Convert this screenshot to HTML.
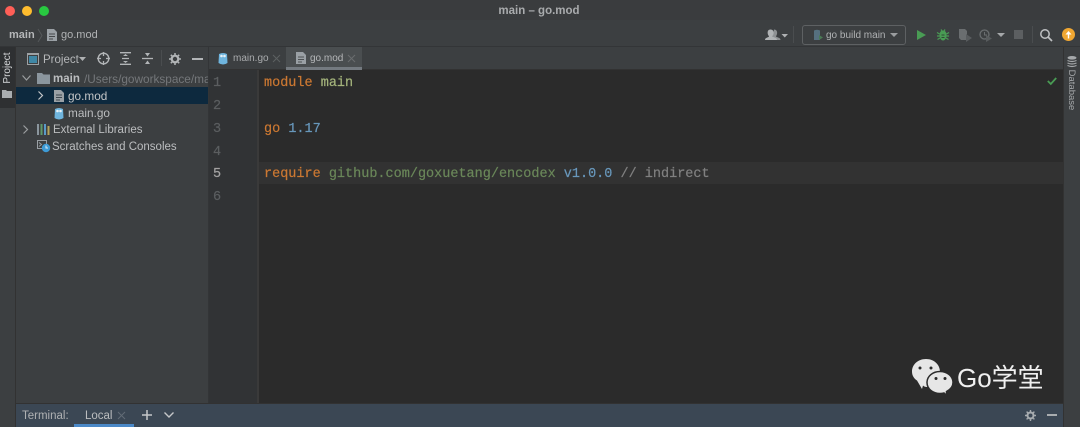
<!DOCTYPE html>
<html><head><meta charset="utf-8"><style>
html,body{margin:0;padding:0;width:1080px;height:427px;overflow:hidden;background:#3c3f41}
body{position:relative;font-family:"Liberation Sans",sans-serif;font-size:11.5px;color:#bbbbbb}
.a,.t{position:absolute}
.t{white-space:nowrap;line-height:16px}
.c{font-family:"Liberation Mono",monospace;font-size:13.5px;line-height:18px;-webkit-text-stroke:.2px}
svg{position:absolute;overflow:visible}
</style></head><body>
<!-- regions -->
<div class="a" style="left:0;top:0;width:1080px;height:20px;background:#3a3c3e"></div>
<div class="a" style="left:0;top:46px;width:1080px;height:1px;background:#333537"></div>
<div class="a" style="left:0;top:47px;width:16px;height:380px;background:#3c3f41"></div>
<div class="a" style="left:15px;top:47px;width:1px;height:380px;background:#323232"></div>
<div class="a" style="left:0;top:47px;width:15px;height:61px;background:#2e3032"></div>
<div class="a" style="left:208px;top:47px;width:1px;height:357px;background:#333537"></div>
<div class="a" style="left:209px;top:70px;width:49px;height:334px;background:#313335"></div>
<div class="a" style="left:258px;top:70px;width:805px;height:334px;background:#2b2b2b"></div>
<div class="a" style="left:257px;top:70px;width:2px;height:334px;background:#3a3a3a"></div>
<div class="a" style="left:259px;top:162px;width:804px;height:22px;background:#323232"></div>
<div class="a" style="left:1063px;top:47px;width:1px;height:380px;background:#323232"></div>
<div class="a" style="left:209px;top:69px;width:854px;height:1px;background:#323232"></div>
<div class="a" style="left:286px;top:47px;width:76px;height:23px;background:#4a4e50"></div>
<div class="a" style="left:286px;top:67px;width:76px;height:3px;background:#747a80"></div>
<div class="a" style="left:16px;top:87px;width:192px;height:17px;background:#0d293e"></div>
<div class="a" style="left:16px;top:404px;width:1047px;height:23px;background:#3b4754"></div>
<div class="a" style="left:16px;top:403px;width:1047px;height:1px;background:#323232"></div>
<div class="a" style="left:74px;top:424px;width:60px;height:3px;background:#4a88c7"></div>

<!-- traffic lights -->
<div class="a" style="left:5px;top:6px;width:10px;height:10px;border-radius:50%;background:#ff5f57"></div>
<div class="a" style="left:22px;top:6px;width:10px;height:10px;border-radius:50%;background:#febc2e"></div>
<div class="a" style="left:39px;top:6px;width:10px;height:10px;border-radius:50%;background:#28c840"></div>
<div class="t" style="left:-1px;width:1080px;text-align:center;top:3px;font-weight:bold;font-size:11.5px;color:#a9abad">main – go.mod</div>

<!-- breadcrumb -->
<div class="t" style="left:9px;top:27px;font-weight:bold;color:#b5b7b9;font-size:11px">main</div>
<svg style="left:37px;top:29px" width="6" height="13"><path d="M1 0L5 6.5L1 13" fill="none" stroke="#55585a"/></svg>
<svg style="left:47px;top:29px" width="10" height="12"><path d="M0 0H7L10 3V12H0Z" fill="#9aa0a5"/><path d="M2 5H8M2 7.5H8M2 10H6" stroke="#45484a"/></svg>
<div class="t" style="left:61px;top:27px;font-size:11px;color:#b0b2b4">go.mod</div>

<!-- right toolbar -->
<svg style="left:765px;top:29px" width="24" height="12"><path d="M9 .5C11.500 .5 12.500 2.500 12 5C11.800 6 11 7 11 7.500C12 8.500 15.500 8.500 15.500 11H7Z" fill="#8e9193"/><path d="M5.500 .5C8 .5 9 2.500 8.500 5C8.300 6 7.500 7 7.500 7.500C8.500 8.500 12 8.500 12 11H0C0 8.500 3.500 8.500 4 7.500C4 7 3 6 2.800 5C2.300 2.500 3 .5 5.500 .5Z" fill="#b0b3b5"/><path d="M16.500 5H23L19.750 8.500Z" fill="#afb1b3"/></svg>
<div class="a" style="left:793px;top:26px;width:1px;height:17px;background:#4a4d4f"></div>
<div class="a" style="left:802px;top:25px;width:102px;height:18px;border:1px solid #5e6163;border-radius:3px"></div>
<svg style="left:812px;top:29px" width="12" height="12"><path d="M2 1.500Q5 0 8 1.500V11H2Z" fill="#56707f"/><path d="M7 6L11 8.500L7 11Z" fill="#4a7a55"/></svg>
<div class="t" style="left:826px;top:28px;font-size:10px;color:#b0b2b4">go build main</div>
<svg style="left:890px;top:33px" width="8" height="4"><path d="M0 0H8L4 4Z" fill="#9a9d9f"/></svg>
<svg style="left:917px;top:30px" width="9" height="10"><path d="M0 0L9 5L0 10Z" fill="#499c54"/></svg>
<svg style="left:937px;top:29px" width="12" height="12"><path d="M6 1.500C8.500 1.500 9.500 3.500 9.500 6C9.500 9 8 11.500 6 11.500C4 11.500 2.500 9 2.500 6C2.500 3.500 3.500 1.500 6 1.500Z" fill="#499c54"/><path d="M0 3.500L2.500 5M12 3.500L9.500 5M0 7H3M12 7H9M.5 10.500L3 9M11.500 10.500L9 9M4 .5L5 2M8 .5L7 2" stroke="#499c54" stroke-width="1.200"/><path d="M4.500 6H7.500M4.500 8.500H7.500" stroke="#2f4b33"/></svg>
<svg style="left:959px;top:29px" width="13" height="13"><path d="M0 0H6L8 2V11H2L0 9Z" fill="#6a6e70"/><path d="M7 5L13 9L7 13Z" fill="#585c5e"/></svg>
<svg style="left:979px;top:29px" width="14" height="13"><circle cx="5.500" cy="5.500" r="4.500" fill="none" stroke="#6a6e70" stroke-width="1.300"/><path d="M5.500 3V6H8" fill="none" stroke="#6a6e70"/><path d="M7 6L13 9.500L7 13Z" fill="#585c5e"/></svg>
<svg style="left:997px;top:33px" width="8" height="4"><path d="M0 0H8L4 4Z" fill="#a5a8aa"/></svg>
<div class="a" style="left:1014px;top:30px;width:9px;height:9px;background:#5c5f61"></div>
<div class="a" style="left:1032px;top:26px;width:1px;height:17px;background:#4a4d4f"></div>
<svg style="left:1040px;top:29px" width="12" height="12"><circle cx="5" cy="5" r="4.200" fill="none" stroke="#bfc1c3" stroke-width="1.500"/><path d="M8 8L12 12" stroke="#bfc1c3" stroke-width="1.700"/></svg>
<svg style="left:1062px;top:28px" width="13" height="13"><circle cx="6.500" cy="6.500" r="6.500" fill="#f0a732"/><path d="M6.500 10.500V5.500" stroke="#fff" stroke-width="1.400"/><path d="M3.500 6.500L6.500 3L9.500 6.500Z" fill="#fff"/></svg>

<!-- left strip -->
<div class="t" style="left:-17px;top:60px;width:50px;height:16px;font-size:10px;color:#d6d8da;transform:rotate(-90deg);text-align:center;line-height:16px">Project</div>
<svg style="left:2px;top:90px" width="10" height="8"><path d="M0 0H4L5 1H10V8H0Z" fill="#a9adb0"/></svg>

<!-- project toolbar -->
<svg style="left:27px;top:53px" width="12" height="12"><rect x=".5" y=".5" width="11" height="11" fill="none" stroke="#9da1a4"/><rect x="2" y="3" width="8" height="7" fill="#3f87a5"/><path d="M1 1.500H11" stroke="#9da1a4"/></svg>
<div class="t" style="left:43px;top:52px;color:#b5b7b9;font-size:11.500px">Project</div>
<svg style="left:79px;top:57px" width="7" height="4"><path d="M0 0H7L3.500 4Z" fill="#afb1b3"/></svg>
<svg style="left:97px;top:52px" width="13" height="13"><circle cx="6.500" cy="6.500" r="5.300" fill="none" stroke="#b2b5b7" stroke-width="1.400"/><path d="M6.500 0V4M6.500 9V13M0 6.500H4M9 6.500H13" stroke="#b2b5b7" stroke-width="1.300"/></svg>
<svg style="left:120px;top:52px" width="11" height="13"><path d="M0 .7H11M0 12.300H11M2 6.500H9" stroke="#b2b5b7" stroke-width="1.300"/><path d="M3 4L5.500 2L8 4ZM3 9L5.500 11L8 9Z" fill="#b2b5b7"/></svg>
<svg style="left:142px;top:52px" width="11" height="13"><path d="M0 6.500H11" stroke="#b2b5b7" stroke-width="1.300"/><path d="M3 1L5.500 4.500L8 1ZM3 12L5.500 8.500L8 12Z" fill="#b2b5b7"/></svg>
<div class="a" style="left:161px;top:50px;width:1px;height:16px;background:#4a4d4f"></div>
<svg style="left:169px;top:53px" width="12" height="12"><circle cx="6" cy="6" r="3.300" fill="none" stroke="#b2b5b7" stroke-width="2.200"/><path d="M6 0V12M0 6H12M1.800 1.800L10.200 10.200M10.200 1.800L1.800 10.200" stroke="#b2b5b7" stroke-width="1.500" stroke-dasharray="2 8"/></svg>
<div class="a" style="left:192px;top:58px;width:11px;height:1.500px;background:#b2b5b7"></div>

<!-- tabs -->
<svg style="left:218px;top:52px" width="10" height="13"><path d="M1 2Q5 0 9 2L9.500 11Q5 14 .5 11Z" fill="#6fb5de"/><circle cx="3.500" cy="4" r="1.300" fill="#e8f2f7"/><circle cx="6.500" cy="4" r="1.300" fill="#e8f2f7"/></svg>
<div class="t" style="left:233px;top:51px;font-size:10px;color:#a9abad">main.go</div>
<svg style="left:273px;top:55px" width="7" height="7"><path d="M0 0L7 7M7 0L0 7" stroke="#5d6062"/></svg>
<svg style="left:296px;top:52px" width="10" height="12"><path d="M0 0H7L10 3V12H0Z" fill="#9aa0a5"/><path d="M2 5H8M2 7.500H8M2 10H6" stroke="#4e5254"/></svg>
<div class="t" style="left:310px;top:51px;font-size:10px;color:#b5b7b9">go.mod</div>
<svg style="left:348px;top:55px" width="7" height="7"><path d="M0 0L7 7M7 0L0 7" stroke="#6a6d6f"/></svg>

<!-- tree -->
<svg style="left:22px;top:75px" width="9" height="6"><path d="M.5 .5L4.500 5L8.500 .5" fill="none" stroke="#9a9d9f" stroke-width="1.200"/></svg>
<svg style="left:37px;top:73px" width="13" height="11"><path d="M0 0H5L6.500 1.500H13V11H0Z" fill="#8b969e"/></svg>
<div class="t" style="left:53px;top:71px;font-weight:bold;color:#bbbdbf;font-size:11.500px">main</div>
<div class="t" style="left:84px;top:71px;width:124px;overflow:hidden;color:#74777a;font-size:11.800px">/Users/goworkspace/main</div>
<svg style="left:38px;top:91px" width="5" height="9"><path d="M.5 .5L4.500 4.500L.5 8.500" fill="none" stroke="#c5c7c9" stroke-width="1.200"/></svg>
<svg style="left:54px;top:90px" width="10" height="12"><path d="M0 0H7L10 3V12H0Z" fill="#9aa0a5"/><path d="M2 5H8M2 7.500H8M2 10H6" stroke="#3f484f"/></svg>
<div class="t" style="left:68px;top:88px;color:#c3c5c7;font-size:11.800px;line-height:17px">go.mod</div>
<svg style="left:54px;top:107px" width="10" height="13"><path d="M1 2Q5 0 9 2L9.500 11Q5 14 .5 11Z" fill="#6fb5de"/><circle cx="3.500" cy="4" r="1.300" fill="#e8f2f7"/><circle cx="6.500" cy="4" r="1.300" fill="#e8f2f7"/></svg>
<div class="t" style="left:68px;top:105px;color:#bbbdbf;font-size:11.800px;line-height:17px">main.go</div>
<svg style="left:23px;top:125px" width="5" height="9"><path d="M.5 .5L4.500 4.500L.5 8.500" fill="none" stroke="#9a9d9f" stroke-width="1.200"/></svg>
<svg style="left:37px;top:124px" width="13" height="11"><path d="M1 0V11" stroke="#8b969e" stroke-width="2"/><path d="M4.500 0V11" stroke="#5f9a6a" stroke-width="2"/><path d="M8 0V11" stroke="#5a9ac8" stroke-width="2"/><path d="M11.500 2V11" stroke="#b5a35a" stroke-width="2"/></svg>
<div class="t" style="left:53px;top:122px;color:#bbbdbf;font-size:11.500px">External Libraries</div>
<svg style="left:37px;top:140px" width="14" height="12"><rect x=".5" y=".5" width="9" height="8" fill="none" stroke="#9aa0a5"/><path d="M2 2.500L4.500 4.500L2 6.500" fill="none" stroke="#9aa0a5"/><circle cx="9" cy="8" r="4.200" fill="#3d9bd6"/><path d="M9 5.500V8H11" fill="none" stroke="#dbeaf4"/></svg>
<div class="t" style="left:52px;top:139px;color:#bbbdbf;font-size:11.500px">Scratches and Consoles</div>

<!-- gutter -->
<div class="t c" style="left:213px;top:75px;color:#5b5e60">1</div>
<div class="t c" style="left:213px;top:98px;color:#5b5e60">2</div>
<div class="t c" style="left:213px;top:121px;color:#5b5e60">3</div>
<div class="t c" style="left:213px;top:144px;color:#5b5e60">4</div>
<div class="t c" style="left:213px;top:166px;color:#a4a3a3">5</div>
<div class="t c" style="left:213px;top:189px;color:#5b5e60">6</div>

<!-- code -->
<div class="t c" style="left:264px;top:75px"><span style="color:#cc7832">module</span> <span style="color:#a5b57c">main</span></div>
<div class="t c" style="left:264px;top:121px"><span style="color:#cc7832">go</span> <span style="color:#6897bb">1.17</span></div>
<div class="t c" style="left:264px;top:166px"><span style="color:#cc7832">require</span> <span style="color:#6a8759">github.com/goxuetang/encodex</span> <span style="color:#6897bb">v1.0.0</span> <span style="color:#808080">// indirect</span></div>

<svg style="left:1047px;top:77px" width="10" height="8"><path d="M.8 4L3.800 7L9.200 1" fill="none" stroke="#499c54" stroke-width="1.800"/></svg>

<!-- right strip -->
<svg style="left:1067px;top:56px" width="10" height="10"><ellipse cx="5" cy="1.800" rx="4.500" ry="1.800" fill="#a5a8aa"/><path d="M.5 4.500Q5 6.500 9.500 4.500M.5 7Q5 9 9.500 7M.5 9.500Q5 11.500 9.500 9.500" fill="none" stroke="#a5a8aa" stroke-width="1.200"/></svg>
<div class="t" style="left:1046px;top:82px;width:50px;height:16px;text-align:center;font-size:9.500px;color:#a5a8aa;transform:rotate(90deg)">Database</div>

<!-- bottom -->
<div class="t" style="left:22px;top:408px;color:#afb1b3;font-size:11.500px">Terminal:</div>
<div class="t" style="left:85px;top:408px;color:#bbbdbf;font-size:11.500px">Local</div>
<svg style="left:118px;top:412px" width="7" height="7"><path d="M0 0L7 7M7 0L0 7" stroke="#626c76"/></svg>
<svg style="left:142px;top:410px" width="10" height="10"><path d="M5 0V10M0 5H10" stroke="#c5c7c9" stroke-width="1.500"/></svg>
<svg style="left:164px;top:412px" width="10" height="6"><path d="M.5 .5L5 5L9.500 .5" fill="none" stroke="#c5c7c9" stroke-width="1.400"/></svg>
<svg style="left:1025px;top:410px" width="11" height="11"><circle cx="5.500" cy="5.500" r="3" fill="none" stroke="#a9adb0" stroke-width="2"/><path d="M5.500 0V11M0 5.500H11M1.600 1.600L9.400 9.400M9.400 1.600L1.600 9.400" stroke="#a9adb0" stroke-width="1.400" stroke-dasharray="2 7.500"/></svg>
<div class="a" style="left:1047px;top:414px;width:10px;height:1.500px;background:#a9adb0"></div>

<!-- watermark -->
<svg style="left:910px;top:358px" width="44" height="38"><path d="M16 1C8 1 2 6.500 2 13.500C2 17.500 4 20.500 7 22.500L12 31L13 27.500C14 28.500 15 29 17 29C25 29 30 21 30 14C30 6.500 24 1 16 1Z" fill="#e6e6e6"/><path d="M30 13.500C23 13.500 17 18 17 24.500C17 31 23 35.500 30 35.500C31.500 35.500 33 35.300 34 35L36.500 37.500L36.500 33.500C40.500 31.500 43 28.500 43 24.500C43 18 37 13.500 30 13.500Z" fill="#e6e6e6" stroke="#2b2b2b" stroke-width="1.500"/><circle cx="10" cy="10" r="1.500" fill="#2b2b2b"/><circle cx="21" cy="10" r="1.500" fill="#2b2b2b"/><circle cx="26" cy="20.500" r="1.500" fill="#2b2b2b"/><circle cx="35" cy="20.500" r="1.500" fill="#2b2b2b"/></svg>
<div class="t" style="left:957px;top:363px;font-size:26px;line-height:30px;color:#f0f0f0;font-family:'Liberation Sans','Noto Sans CJK SC',sans-serif">Go学堂</div>
</body></html>
